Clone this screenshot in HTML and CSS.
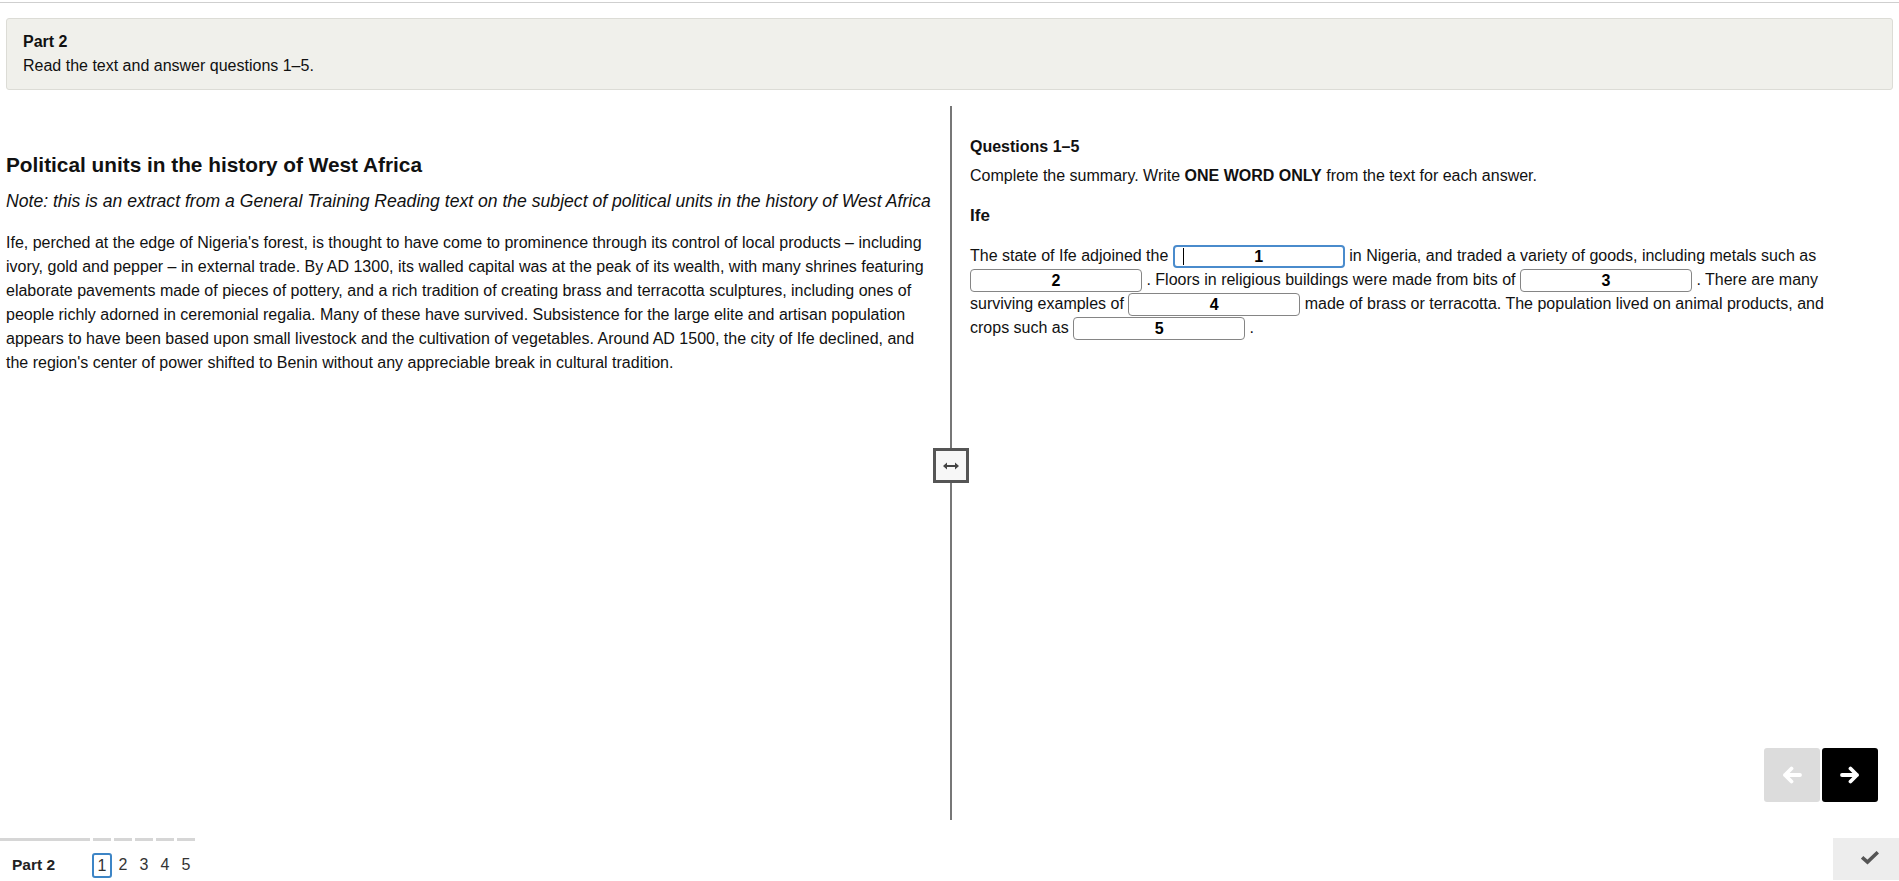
FILE: index.html
```html
<!DOCTYPE html>
<html lang="en">
<head>
<meta charset="utf-8">
<title>Part 2</title>
<link rel="stylesheet" href="styles.css">
</head>
<body>
<div class="topline"></div>
<div class="instructions">
  <div class="ins-title">Part 2</div>
  <div class="ins-text">Read the text and answer questions 1–5.</div>
</div>

<main class="split">
  <section class="pane-left">
    <h2 class="title">Political units in the history of West Africa</h2>
    <p class="note">Note: this is an extract from a General Training Reading text on the subject of political units in the history of West Africa</p>
    <p class="passage">Ife, perched at the edge of Nigeria's forest, is thought to have come to prominence through its control of local products – including ivory, gold and pepper – in external trade. By AD 1300, its walled capital was at the peak of its wealth, with many shrines featuring elaborate pavements made of pieces of pottery, and a rich tradition of creating brass and terracotta sculptures, including ones of people richly adorned in ceremonial regalia. Many of these have survived. Subsistence for the large elite and artisan population appears to have been based upon small livestock and the cultivation of vegetables. Around AD 1500, the city of Ife declined, and the region's center of power shifted to Benin without any appreciable break in cultural tradition.</p>
  </section>

  <div class="divider">
    <div class="handle">
      <svg width="18" height="10" viewBox="0 0 18 10"><path d="M4 5 H14" stroke="#444" stroke-width="2"/><path d="M1 5 L5 1.5 V8.5 Z M17 5 L13 1.5 V8.5 Z" fill="#444"/></svg>
    </div>
  </div>

  <section class="pane-right">
    <div class="qcontent">
      <h3 class="q-head">Questions 1–5</h3>
      <p class="q-inst">Complete the summary. Write <b>ONE WORD ONLY</b> from the text for each answer.</p>
      <h4 class="q-sub">Ife</h4>
      <p class="summary">The state of Ife adjoined the <span class="gap focus"><span class="caret"></span>1</span> in Nigeria, and traded a variety of goods, including metals such as <span class="gap">2</span> . Floors in religious buildings were made from bits of <span class="gap">3</span> . There are many surviving examples of <span class="gap">4</span> made of brass or terracotta. The population lived on animal products, and crops such as <span class="gap">5</span> .</p>
    </div>
    <div class="nav">
      <button class="navbtn prev" aria-label="Previous">
        <svg width="20" height="18" viewBox="0 0 20 18"><path d="M18 9 H3 M9.5 2.5 L3 9 L9.5 15.5" fill="none" stroke="#fff" stroke-width="3.8" stroke-linecap="round" stroke-linejoin="round"/></svg>
      </button>
      <button class="navbtn next" aria-label="Next">
        <svg width="20" height="18" viewBox="0 0 20 18"><path d="M2 9 H17 M10.5 2.5 L17 9 L10.5 15.5" fill="none" stroke="#fff" stroke-width="3.8" stroke-linecap="round" stroke-linejoin="round"/></svg>
      </button>
    </div>
  </section>
</main>

<footer class="footer">
  <div class="fpart"><span class="fpart-label">Part 2</span></div>
  <div class="fq"><span class="fq-num current">1</span></div>
  <div class="fq"><span class="fq-num">2</span></div>
  <div class="fq"><span class="fq-num">3</span></div>
  <div class="fq"><span class="fq-num">4</span></div>
  <div class="fq"><span class="fq-num">5</span></div>
  <div class="check">
    <svg width="18" height="14" viewBox="0 0 18 14"><path d="M2.5 7.5 L6.5 11 L15.5 2.5" fill="none" stroke="#555" stroke-width="3.6" stroke-linecap="square"/></svg>
  </div>
</footer>
</body>
</html>
```

FILE: styles.css
```css
* { box-sizing: border-box; }
html, body {
  margin: 0;
  padding: 0;
  background: #fff;
  font-family: "Liberation Sans", Arial, sans-serif;
  color: #111;
  font-size: 16px;
}
body { width: 1899px; height: 881px; overflow: hidden; }

.topline {
  height: 3px;
  border-bottom: 1px solid #cfcfcf;
}

.instructions {
  margin: 15px 6px 0 6px;
  height: 72px;
  background: #f0f0eb;
  border: 1px solid #dcdcd6;
  border-radius: 3px;
  padding: 11px 16px 0 16px;
}
.ins-title { font-weight: bold; line-height: 24px; }
.ins-text { line-height: 24px; }

.split {
  margin-top: 16px;
  height: 714px;
  display: grid;
  grid-template-columns: 950px 2px 1fr;
}

.pane-left {
  padding: 45px 15px 0 6px;
}
.title {
  margin: 0;
  font-size: 20.8px;
  line-height: 28px;
  font-weight: bold;
}
.note {
  margin: 9px 0 0 0;
  font-style: italic;
  font-size: 17.6px;
  line-height: 26px;
}
.passage {
  margin: 17px 0 0 0;
  line-height: 24px;
}

.divider {
  position: relative;
  background: #777;
}
.handle {
  position: absolute;
  left: -17px;
  top: 342px;
  width: 36px;
  height: 35px;
  background: #f7f7f7;
  border: 3px solid #555;
  display: flex;
  align-items: center;
  justify-content: center;
}

.pane-right {
  padding: 31px 21px 18px 18px;
  display: flex;
  flex-direction: column;
}
.qcontent { width: 880px; }
.q-head {
  margin: 0;
  font-size: 16px;
  line-height: 20px;
  font-weight: bold;
}
.q-inst {
  margin: 8px 0 0 0;
  font-size: 16px;
  line-height: 22px;
}
.q-sub {
  margin: 17px 0 0 0;
  font-size: 17px;
  line-height: 24px;
  font-weight: bold;
}
.summary {
  margin: 16px 0 0 0;
  line-height: 24px;
}
.gap {
  position: relative;
  display: inline-block;
  vertical-align: top;
  margin-top: 1px;
  width: 172px;
  height: 23px;
  border: 1px solid #858585;
  border-radius: 4px;
  text-align: center;
  font-weight: bold;
  font-size: 16px;
  line-height: 21px;
  color: #000;
}
.gap.focus {
  border: 2px solid #4a8bcc;
  line-height: 19px;
}
.caret {
  position: absolute;
  left: 8px;
  top: 1px;
  width: 1px;
  height: 17px;
  background: #000;
}

.nav {
  margin-top: auto;
  align-self: flex-end;
  display: flex;
  gap: 2px;
}
.navbtn {
  width: 56px;
  height: 54px;
  border: none;
  border-radius: 3px;
  padding: 0;
  display: flex;
  align-items: center;
  justify-content: center;
}
.navbtn.prev { background: #dcdcdc; }
.navbtn.next { background: #000; }

.footer {
  margin-top: 18px;
  height: 42px;
  display: flex;
  align-items: stretch;
}
.fpart {
  width: 90px;
  margin-right: 3px;
  border-top: 3px solid #d6d6d6;
  padding: 12px 0 0 12px;
}
.fpart-label {
  font-weight: bold;
  font-size: 15.5px;
  line-height: 24px;
  color: #222;
}
.fq {
  width: 18px;
  margin-right: 3px;
  border-top: 3px solid #d6d6d6;
  padding-top: 12px;
  display: flex;
  justify-content: center;
}
.fq-num {
  display: block;
  font-size: 16px;
  line-height: 24px;
  color: #333;
  text-align: center;
}
.fq-num.current {
  width: 20px;
  height: 25px;
  margin: 0 -1px;
  border: 2px solid #3d85c6;
  border-radius: 3px;
  line-height: 21px;
  flex: none;
}
.check {
  margin-left: auto;
  width: 66px;
  background: #ededed;
  display: flex;
  align-items: center;
  justify-content: center;
  padding: 0 0 2px 8px;
}
```
